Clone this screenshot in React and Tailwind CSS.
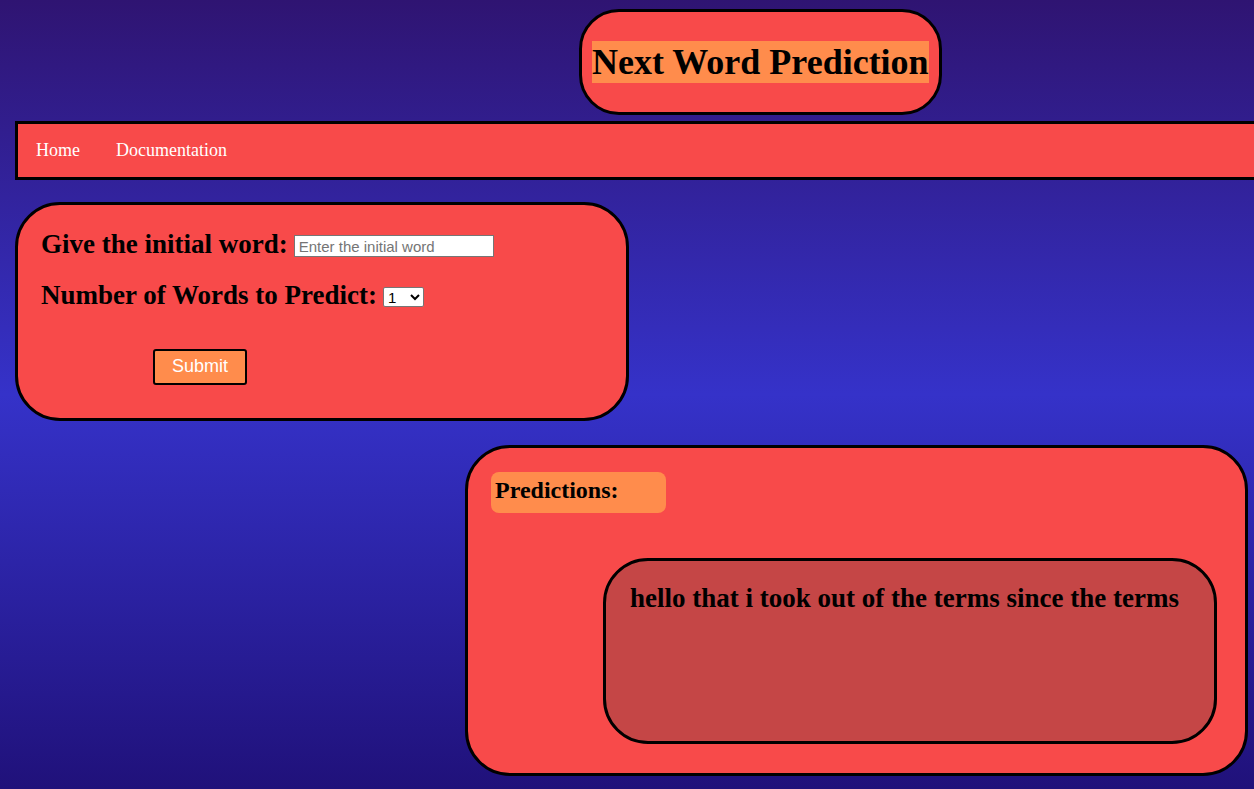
export default function App() {
  return (
    <div className="min-h-screen w-full overflow-hidden bg-[linear-gradient(180deg,#2f1472_0%,#3532c9_50%,#20117a_100%)] font-['Liberation_Serif',serif] text-black">
      {/* Header */}
      <div className="pt-[9px]">
        <div className="ml-[579px] w-fit rounded-[40px] border-[3px] border-black bg-[#f84a4a] px-[10px] py-[29px]">
          <h1 className="block h-[42px] whitespace-nowrap bg-[#ff8c4c] text-[36px] font-bold leading-[42px]">
            Next Word Prediction
          </h1>
        </div>
      </div>

      {/* Nav */}
      <nav className="ml-[15px] mt-[6px] flex h-[59px] w-full items-center gap-[36px] border-[3px] border-black bg-[#f84a4a] pl-[18px] text-[18px] text-white">
        <span>Home</span>
        <span>Documentation</span>
      </nav>

      {/* Form */}
      <div className="ml-[15px] mt-[22px] h-[219px] w-[614px] rounded-[45px] border-[3px] border-black bg-[#f84a4a] pl-[23px] pt-[24px]">
        <div className="flex items-end text-[27px] font-bold leading-[31px]">
          <span className="whitespace-nowrap">Give the initial word:</span>
          <input
            type="text"
            placeholder="Enter the initial word"
            className="mb-[3px] ml-[6px] h-[22px] w-[200px] border border-[#767676] bg-white px-[4px] font-['Liberation_Sans',Arial,sans-serif] text-[15px] font-normal text-black placeholder:text-[#757575]"
          />
        </div>
        <div className="mt-[20px] flex items-end text-[27px] font-bold leading-[31px]">
          <span className="whitespace-nowrap">Number of Words to Predict:</span>
          <select
            defaultValue="1"
            className="mb-[4px] ml-[6px] h-[20px] w-[41px] rounded-[2px] border border-[#767676] bg-white font-['Liberation_Sans',Arial,sans-serif] text-[15px] font-normal leading-[18px] text-black"
          >
            <option value="1">1</option>
            <option value="2">2</option>
            <option value="3">3</option>
            <option value="4">4</option>
            <option value="5">5</option>
          </select>
        </div>
        <button className="ml-[112px] mt-[38px] flex h-[36px] w-[94px] items-center justify-center rounded-[3px] border-2 border-black bg-[#ff8c4c] pb-[1px] font-['Liberation_Sans',Arial,sans-serif] text-[18px] text-white">
          Submit
        </button>
      </div>

      {/* Predictions */}
      <div className="ml-[465px] mt-[24px] h-[331px] w-[783px] rounded-[45px] border-[3px] border-black bg-[#f84a4a] pl-[23px] pt-[24px]">
        <div className="h-[41px] w-[175px] rounded-[8px] bg-[#ff8c4c] pl-[4px] pt-[5px] text-[24px] font-bold leading-[27px]">
          Predictions:
        </div>
        <div className="ml-[112px] mt-[45px] h-[186px] w-[614px] rounded-[45px] border-[3px] border-black bg-[#c54646] pl-[24px] pt-[22px] text-[27px] font-bold leading-[31px]">
          hello that i took out of the terms since the terms
        </div>
      </div>
    </div>
  );
}
